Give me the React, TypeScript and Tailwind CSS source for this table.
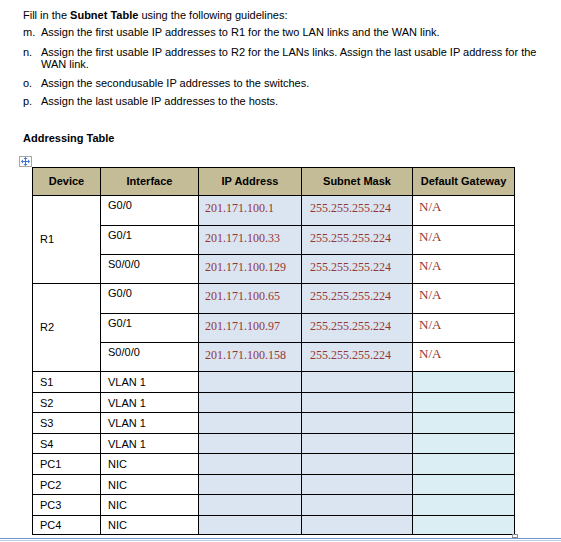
const guidelines: { label: string; lines: string[]; mt: string }[] = [
  { label: 'm.', lines: ['Assign the first usable IP addresses to R1 for the two LAN links and the WAN link.'], mt: 'mt-[5px]' },
  {
    label: 'n.',
    lines: ['Assign the first usable IP addresses to R2 for the LANs links. Assign the last usable IP address for the', 'WAN link.'],
    mt: 'mt-[8px]',
  },
  { label: 'o.', lines: ['Assign the secondusable IP addresses to the switches.'], mt: 'mt-[7px]' },
  { label: 'p.', lines: ['Assign the last usable IP addresses to the hosts.'], mt: 'mt-[6px]' },
];

const routers = [
  {
    device: 'R1',
    rows: [
      { intf: 'G0/0', ip: '201.171.100.1', h: 'h-[30px]' },
      { intf: 'G0/1', ip: '201.171.100.33', h: 'h-[29px]' },
      { intf: 'S0/0/0', ip: '201.171.100.129', h: 'h-[29px]' },
    ],
  },
  {
    device: 'R2',
    rows: [
      { intf: 'G0/0', ip: '201.171.100.65', h: 'h-[30px]' },
      { intf: 'G0/1', ip: '201.171.100.97', h: 'h-[29px]' },
      { intf: 'S0/0/0', ip: '201.171.100.158', h: 'h-[29px]' },
    ],
  },
];

const hosts = [
  { device: 'S1', intf: 'VLAN 1', h: 'h-[21px]' },
  { device: 'S2', intf: 'VLAN 1', h: 'h-[20px]' },
  { device: 'S3', intf: 'VLAN 1', h: 'h-[21px]' },
  { device: 'S4', intf: 'VLAN 1', h: 'h-[20px]' },
  { device: 'PC1', intf: 'NIC', h: 'h-[21px]' },
  { device: 'PC2', intf: 'NIC', h: 'h-[20px]' },
  { device: 'PC3', intf: 'NIC', h: 'h-[21px]' },
  { device: 'PC4', intf: 'NIC', h: 'h-[19px]' },
];

const cell = 'border border-black p-0';
const serif = "font-['Liberation_Serif',serif] text-[12px] leading-[14px] text-[#943634]";

function MoveHandle() {
  return (
    <div className="ml-[19px] w-[13px] h-[11px] border border-[#a6a6a6] bg-white flex items-center justify-center">
      <svg width="9" height="9" viewBox="0 0 9 9" fill="#3b6fd0">
        <rect x="4" y="1" width="1" height="7" />
        <rect x="1" y="4" width="7" height="1" />
        <path d="M4.5 0 L6.5 2 L2.5 2 Z" />
        <path d="M4.5 9 L6.5 7 L2.5 7 Z" />
        <path d="M0 4.5 L2 2.5 L2 6.5 Z" />
        <path d="M9 4.5 L7 2.5 L7 6.5 Z" />
      </svg>
    </div>
  );
}

export default function App() {
  return (
    <div className="relative w-[561px] h-[542px] bg-white overflow-hidden font-['Liberation_Sans',Arial,sans-serif] text-[11px] text-black">
      <div className="pt-[9px] pl-[23px]">
        <p className="leading-[12px]">
          Fill in the <b>Subnet Table</b> using the following guidelines:
        </p>
        {guidelines.map((g) => (
          <div key={g.label} className={`${g.mt} flex leading-[12px]`}>
            <span className="w-[18px] shrink-0">{g.label}</span>
            <div>
              {g.lines.map((l) => (
                <div key={l}>{l}</div>
              ))}
            </div>
          </div>
        ))}
        <p className="mt-[25px] leading-[12px] font-bold">Addressing Table</p>
      </div>

      <div className="mt-[12px]">
        <MoveHandle />
        <table className="ml-[32px] border-collapse table-fixed w-[482px]">
          <colgroup>
            <col className="w-[68px]" />
            <col className="w-[98px]" />
            <col className="w-[103px]" />
            <col className="w-[111px]" />
            <col className="w-[102px]" />
          </colgroup>
          <thead>
            <tr className="h-[28px] bg-[#c4bc96] font-bold">
              <th className={`${cell} text-center`}>Device</th>
              <th className={`${cell} text-center`}>Interface</th>
              <th className={`${cell} text-center`}>IP Address</th>
              <th className={`${cell} text-center`}>Subnet Mask</th>
              <th className={`${cell} text-center`}>Default Gateway</th>
            </tr>
          </thead>
          <tbody>
            {routers.map((r) =>
              r.rows.map((row, i) => (
                <tr key={r.device + row.intf} className={row.h}>
                  {i === 0 && (
                    <td rowSpan={3} className={`${cell} pl-[7px] align-middle`}>
                      {r.device}
                    </td>
                  )}
                  <td className={`${cell} pl-[7px] pt-[2px] align-top leading-[14px]`}>{row.intf}</td>
                  <td className={`${cell} bg-[#dbe5f1] pl-[6px] pt-[4px] align-top`}>
                    <span className={serif}>{row.ip}</span>
                  </td>
                  <td className={`${cell} bg-[#dbe5f1] pl-[8px] pt-[4px] align-top`}>
                    <span className={serif}>255.255.255.224</span>
                  </td>
                  <td className={`${cell} pl-[6px] pt-[3px] align-top`}>
                    <span className="font-['Liberation_Serif',serif] text-[13px] leading-[14px] text-[#943634]">N/A</span>
                  </td>
                </tr>
              ))
            )}
            {hosts.map((h) => (
              <tr key={h.device} className={h.h}>
                <td className={`${cell} pl-[7px] align-middle leading-[12px]`}>{h.device}</td>
                <td className={`${cell} pl-[7px] align-middle leading-[12px]`}>{h.intf}</td>
                <td className={`${cell} bg-[#dbe5f1]`} />
                <td className={`${cell} bg-[#dbe5f1]`} />
                <td className={`${cell} bg-[#daeef3]`} />
              </tr>
            ))}
          </tbody>
        </table>
      </div>

      <div className="absolute left-[512px] top-[534px] w-[6px] h-[4px] border border-[#8c8c8c] bg-white" />
      <div className="absolute left-0 right-0 top-[538px] h-[1px] bg-[#6f93cc]" />
      <div className="absolute left-0 right-0 top-[540px] h-[1px] bg-[#b9cde8]" />
    </div>
  );
}
